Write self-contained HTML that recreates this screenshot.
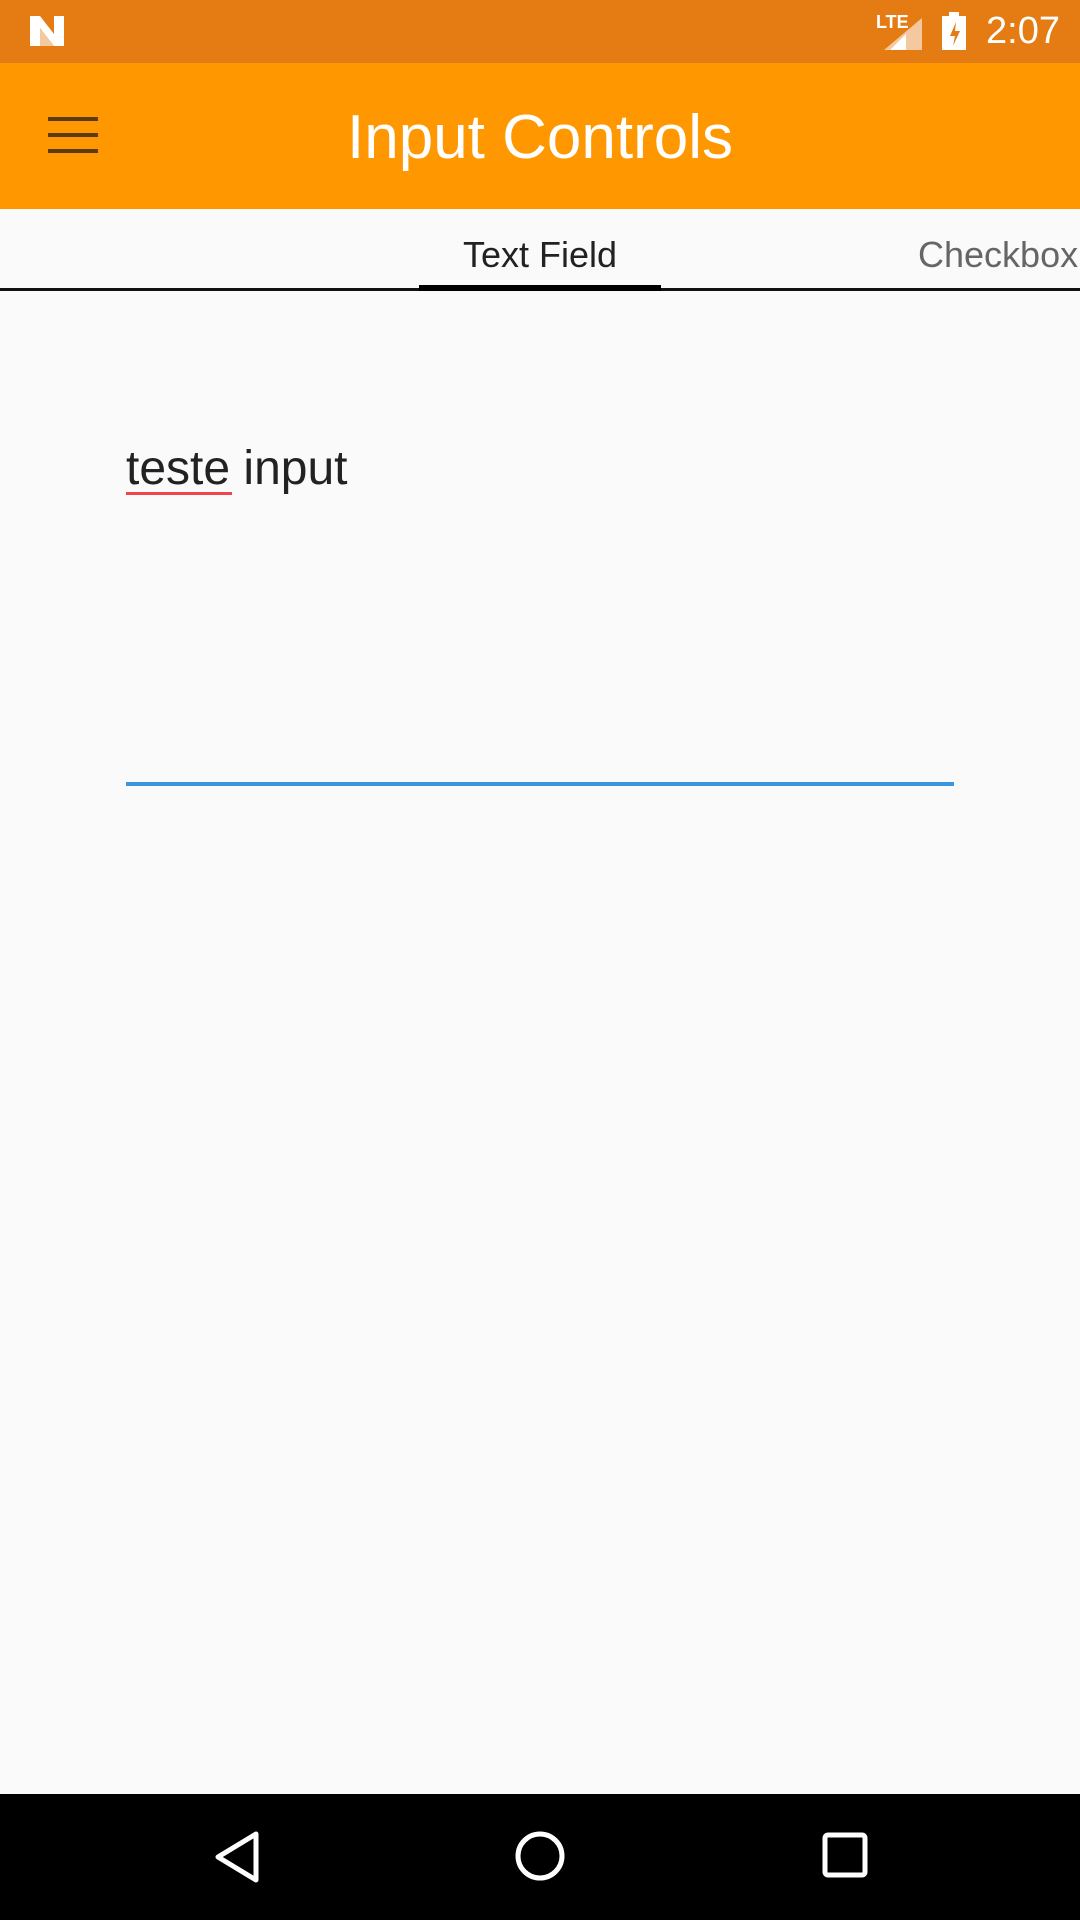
<!DOCTYPE html>
<html><head><meta charset="utf-8"><style>
*{margin:0;padding:0;box-sizing:border-box}
body{width:1080px;height:1920px;background:#fafafa;font-family:"Liberation Sans",sans-serif;position:relative;overflow:hidden}
.sb{position:absolute;top:0;left:0;width:1080px;height:63px;background:#e57b13}
.ab{position:absolute;top:63px;left:0;width:1080px;height:146px;background:#ff9800}
.tabs{position:absolute;top:209px;left:0;width:1080px;height:82px;background:#fafafa;border-bottom:3px solid #111}
.t{position:absolute;font-size:36px;top:25px}
.nav{position:absolute;top:1794px;left:0;width:1080px;height:126px;background:#000}
</style></head><body>
<div class="sb">
<svg style="position:absolute;left:28px;top:14px" width="38" height="34" viewBox="0 0 38 34"><path d="M2 2h10l14 18V2h10v30H26L12 14v18H2z" fill="#fff"/><path d="M12 14L26 32H12z" fill="#f5c9a0"/></svg>
<div style="position:absolute;left:876px;top:12px;color:#fff;font-size:18px;font-weight:bold">LTE</div>
<svg style="position:absolute;left:884px;top:18px" width="38" height="32"><path d="M38 0V32H0z" fill="#f5c9a0"/><path d="M22 16V32H6z" fill="#fff"/></svg>
<svg style="position:absolute;left:942px;top:12px" width="24" height="38"><rect x="0" y="4" width="24" height="34" fill="#fff"/><rect x="7" y="0" width="10" height="5" fill="#fff"/><path d="M14 10l-6 14h5l-2 10 7-15h-5z" fill="#e57b13"/></svg>
<div style="position:absolute;left:986px;top:10px;color:#fff;font-size:38px">2:07</div>
</div>
<div class="ab">
<div style="position:absolute;left:48px;top:54px;width:50px;height:4px;background:#5a3a10"></div>
<div style="position:absolute;left:48px;top:70px;width:50px;height:4px;background:#5a3a10"></div>
<div style="position:absolute;left:48px;top:86px;width:50px;height:4px;background:#5a3a10"></div>
<div style="position:absolute;left:0;width:1080px;text-align:center;top:39px;color:#fff;font-size:62px">Input Controls</div>
</div>
<div class="tabs">
<div class="t" style="left:419px;width:242px;text-align:center;color:#222">Text Field</div>
<div class="t" style="left:918px;color:#666">Checkbox</div>
<div style="position:absolute;left:419px;top:76px;width:242px;height:6px;background:#000"></div>
</div>
<div style="position:absolute;left:126px;top:441px;font-size:48px;color:#222">teste input</div>
<div style="position:absolute;left:126px;top:492px;width:106px;height:3px;background:#f0454a"></div>
<div style="position:absolute;left:126px;top:782px;width:828px;height:4px;background:#3a96dd"></div>
<div class="nav">
<svg style="position:absolute;left:212px;top:36px" width="50" height="54"><path d="M44 4L6 27l38 23z" fill="none" stroke="#fff" stroke-width="5" stroke-linejoin="round"/></svg>
<svg style="position:absolute;left:512px;top:34px" width="56" height="56"><circle cx="28" cy="28" r="22" fill="none" stroke="#fff" stroke-width="5"/></svg>
<svg style="position:absolute;left:820px;top:36px" width="50" height="50"><rect x="5" y="5" width="40" height="40" rx="3" fill="none" stroke="#fff" stroke-width="5"/></svg>
</div>
</body></html>
